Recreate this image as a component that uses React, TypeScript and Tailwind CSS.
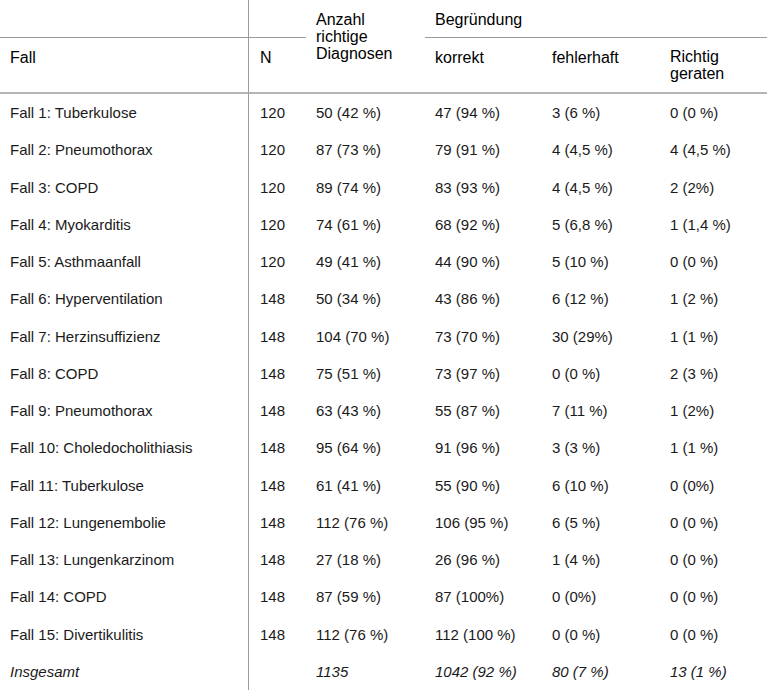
const rows: [string, string, string, string, string, string][] = [
  ["Fall 1: Tuberkulose", "120", "50 (42 %)", "47 (94 %)", "3 (6 %)", "0 (0 %)"],
  ["Fall 2: Pneumothorax", "120", "87 (73 %)", "79 (91 %)", "4 (4,5 %)", "4 (4,5 %)"],
  ["Fall 3: COPD", "120", "89 (74 %)", "83 (93 %)", "4 (4,5 %)", "2 (2%)"],
  ["Fall 4: Myokarditis", "120", "74 (61 %)", "68 (92 %)", "5 (6,8 %)", "1 (1,4 %)"],
  ["Fall 5: Asthmaanfall", "120", "49 (41 %)", "44 (90 %)", "5 (10 %)", "0 (0 %)"],
  ["Fall 6: Hyperventilation", "148", "50 (34 %)", "43 (86 %)", "6 (12 %)", "1 (2 %)"],
  ["Fall 7: Herzinsuffizienz", "148", "104 (70 %)", "73 (70 %)", "30 (29%)", "1 (1 %)"],
  ["Fall 8: COPD", "148", "75 (51 %)", "73 (97 %)", "0 (0 %)", "2 (3 %)"],
  ["Fall 9: Pneumothorax", "148", "63 (43 %)", "55 (87 %)", "7 (11 %)", "1 (2%)"],
  ["Fall 10: Choledocholithiasis", "148", "95 (64 %)", "91 (96 %)", "3 (3 %)", "1 (1 %)"],
  ["Fall 11: Tuberkulose", "148", "61 (41 %)", "55 (90 %)", "6 (10 %)", "0 (0%)"],
  ["Fall 12: Lungenembolie", "148", "112 (76 %)", "106 (95 %)", "6 (5 %)", "0 (0 %)"],
  ["Fall 13: Lungenkarzinom", "148", "27 (18 %)", "26 (96 %)", "1 (4 %)", "0 (0 %)"],
  ["Fall 14: COPD", "148", "87 (59 %)", "87 (100%)", "0 (0%)", "0 (0 %)"],
  ["Fall 15: Divertikulitis", "148", "112 (76 %)", "112 (100 %)", "0 (0 %)", "0 (0 %)"],
  ["Insgesamt", "", "1135", "1042 (92 %)", "80 (7 %)", "13 (1 %)"],
];

const cols = "grid grid-cols-[249px_57px_119px_117px_118px_1fr]";

export default function App() {
  return (
    <div className="w-[767px] h-[690px] overflow-hidden bg-white text-[#1a1a1a] font-['Liberation_Sans',Arial,sans-serif]">
      {/* header */}
      <div className={`${cols} grid-rows-[38px_56px] text-[16px] leading-[17px] text-black`}>
        <div className="col-start-1 row-start-1 border-r border-b border-[#9a9a9a]" />
        <div className="col-start-2 row-start-1 border-b border-[#9a9a9a]" />
        <div className="col-start-3 row-start-1 row-span-2 pl-[10px] pt-[11px] border-b-2 border-[#b4b4b4]">
          Anzahl
          <br />
          richtige
          <br />
          Diagnosen
        </div>
        <div className="col-start-4 col-span-3 row-start-1 pl-[10px] pt-[10.5px] border-b border-[#9a9a9a]">
          Begründung
        </div>
        <div className="col-start-1 row-start-2 pl-[10px] pt-[10.5px] border-r border-r-[#9a9a9a] border-b-2 border-b-[#b4b4b4]">
          Fall
        </div>
        <div className="col-start-2 row-start-2 pl-[11px] pt-[10.5px] border-b-2 border-[#b4b4b4]">N</div>
        <div className="col-start-4 row-start-2 pl-[10px] pt-[10.5px] border-b-2 border-[#b4b4b4]">korrekt</div>
        <div className="col-start-5 row-start-2 pl-[10px] pt-[10.5px] border-b-2 border-[#b4b4b4]">fehlerhaft</div>
        <div className="col-start-6 row-start-2 pl-[10px] pt-[10px] border-b-2 border-[#b4b4b4]">
          Richtig
          <br />
          geraten
        </div>
      </div>

      {/* body */}
      <div className="text-[15px] leading-[17px]">
        {rows.map((r, i) => {
          const total = i === rows.length - 1;
          return (
            <div key={r[0]} className={`${cols} h-[37.27px] ${total ? "italic" : ""}`}>
              <div className="pl-[10px] pt-[10px] border-r border-[#9a9a9a]">{r[0]}</div>
              <div className="pl-[11px] pt-[10px]">{r[1]}</div>
              <div className="pl-[10px] pt-[10px]">{r[2]}</div>
              <div className="pl-[10px] pt-[10px]">{r[3]}</div>
              <div className="pl-[10px] pt-[10px]">{r[4]}</div>
              <div className="pl-[10px] pt-[10px]">{r[5]}</div>
            </div>
          );
        })}
      </div>
    </div>
  );
}
